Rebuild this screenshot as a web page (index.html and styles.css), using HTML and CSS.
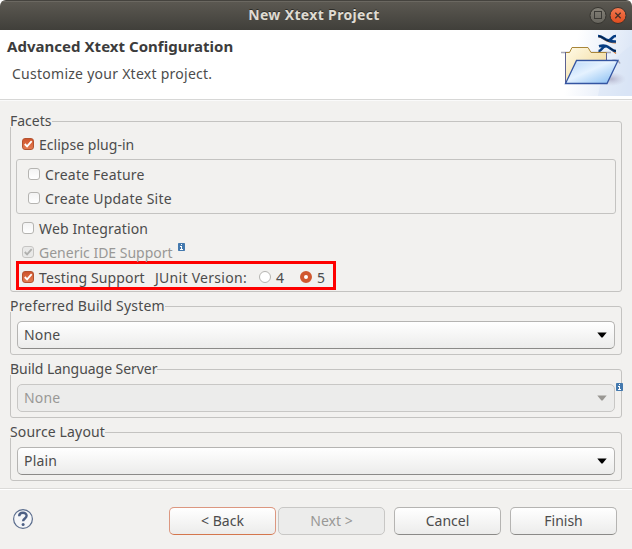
FILE: index.html
```html
<!DOCTYPE html>
<html lang="en">
<head>
<meta charset="utf-8">
<title>New Xtext Project</title>
<link rel="stylesheet" href="styles.css">
</head>
<body>
<div class="window">
  <div class="titlebar">
    <span class="title">New Xtext Project</span>
    <svg class="controls" width="40" height="20" viewBox="0 0 40 20">
      <defs>
        <linearGradient id="gray" x2="0" y2="1"><stop stop-color="#858279"/><stop offset="1" stop-color="#65635c"/></linearGradient>
        <linearGradient id="red" x2="0" y2="1"><stop stop-color="#f47b53"/><stop offset="1" stop-color="#df4b1c"/></linearGradient>
      </defs>
      <circle cx="10" cy="9.5" r="8" fill="url(#gray)" stroke="#34332e"/>
      <rect x="6.5" y="5.5" width="7" height="7" fill="none" stroke="#3b3a36"/>
      <circle cx="30" cy="9.5" r="8" fill="url(#red)" stroke="#34332e"/>
      <path d="M27.3 6.8l5.4 5.4M32.7 6.8l-5.4 5.4" stroke="#4a3027" stroke-width="1.3"/>
    </svg>
  </div>
  <header class="header">
    <div class="heading">
      <h1>Advanced Xtext Configuration</h1>
      <p>Customize your Xtext project.</p>
    </div>
    <svg class="banner" width="75" height="66" viewBox="0 0 75 66">
      <defs>
        <linearGradient id="sky" x1="0" y1=".4" x2="1" y2=".6"><stop offset=".2" stop-color="#fff"/><stop offset="1" stop-color="#dae5f6"/></linearGradient>
        <linearGradient id="back" x2="1" y2="1"><stop stop-color="#fffbe8"/><stop offset="1" stop-color="#efd28b"/></linearGradient>
        <linearGradient id="front" x2="1" y2="1"><stop stop-color="#b4d5f8"/><stop offset=".45" stop-color="#e5f2ff"/><stop offset="1" stop-color="#80baf1"/></linearGradient>
        <radialGradient id="shade"><stop stop-color="#9b98b5" stop-opacity=".65"/><stop offset="1" stop-color="#bbb8ce" stop-opacity="0"/></radialGradient>
      </defs>
      <rect width="75" height="66" fill="url(#sky)"/>
      <path d="M41 66Q45 35 75 15V66z" fill="#d8e3f6" opacity=".5"/>
      <ellipse cx="54" cy="49" rx="15" ry="7" fill="url(#shade)"/>
      <path d="M4 22.5h50M15 31.5h7M55 30.5q6-1 8 3" fill="none" stroke="#a7a9b8" stroke-width="1.5"/>
      <path d="M8.500 53V22.500h4L15 17.500h16l3 5h15.500V48" fill="url(#back)" stroke="#a88538"/>
      <path d="M8.500 53V22M49.500 23v7" stroke="#5d6292"/>
      <path d="M19.500 30.500H61L50 53.500H8.500z" fill="url(#front)" stroke="#3455a2" stroke-width="1.3"/>
      <path d="M20 32h38" stroke="#f0f8ff" opacity=".7"/>
      <path d="M41.500 7c5 0 7 6.300 17.500 5.900M42 22.200l3-3M53 18.500l6 5" fill="none" stroke="#d9792c" stroke-width="1.2"/>
      <path d="M41 6c6 0 6 6 18 5.500M59 6c-4 0-3 2.500-7 4.500M42 16.300c10-3 11 4.700 17 4.700M41.500 21c4 0 2-4 8-5" fill="none" stroke="#063d83" stroke-width="2.700"/>
      <path d="M42 6c5 1 6 4.500 10 5M53 18q4 3 6 3" fill="none" stroke="#071b36"/>
    </svg>
  </header>
  <main class="content">
    <section class="group facets">
      <div class="legend"><span class="w-facets">Facets</span></div>
      <div class="row first"><i class="check on"><svg viewBox="0 0 13 13"><path d="M3 6.5L5.5 9 10.5 3.5"/></svg></i><span class="w-eclipse">Eclipse plug-in</span></div>
      <div class="nested">
        <div class="row"><i class="check"></i><span class="w-feature">Create Feature</span></div>
        <div class="row"><i class="check"></i><span class="w-site">Create Update Site</span></div>
      </div>
      <div class="row"><i class="check"></i><span class="w-web">Web Integration</span></div>
      <div class="row disabled"><i class="check"><svg viewBox="0 0 13 13"><path d="M3 6.5L5.5 9 10.5 3.5"/></svg></i><span class="w-generic">Generic IDE Support</span><svg class="info" width="7" height="8" viewBox="0 0 7 8"><rect width="7" height="8" rx=".7" fill="#4479ae"/><path d="M3 1h1v1H3zM2 3h2v3h1v1H2V6h1V4H2z" fill="#fff"/></svg></div>
      <div class="row testing"><i class="check on"><svg viewBox="0 0 13 13"><path d="M3 6.5L5.5 9 10.5 3.5"/></svg></i><span class="w-testing">Testing Support</span><span class="w-junit">JUnit Version:</span><i class="radio"></i><span class="w-digit">4</span><i class="radio on"></i><span class="w-digit">5</span></div>
    </section>
    <section class="group">
      <div class="legend"><span class="w-build">Preferred Build System</span></div>
      <div class="select"><span class="w-none">None</span><svg width="10" height="6" viewBox="0 0 10 6"><path d="M.3.5h9.400L5.600 5.500H4.400z"/></svg></div>
    </section>
    <section class="group">
      <div class="legend"><span class="w-server">Build Language Server</span></div>
      <div class="select disabled"><span class="w-none">None</span><svg width="10" height="6" viewBox="0 0 10 6"><path d="M.3.5h9.400L5.600 5.500H4.400z"/></svg></div>
      <svg class="info corner" width="7" height="8" viewBox="0 0 7 8"><rect width="7" height="8" rx=".7" fill="#4479ae"/><path d="M3 1h1v1H3zM2 3h2v3h1v1H2V6h1V4H2z" fill="#fff"/></svg>
    </section>
    <section class="group">
      <div class="legend"><span class="w-layout">Source Layout</span></div>
      <div class="select"><span class="w-none">Plain</span><svg width="10" height="6" viewBox="0 0 10 6"><path d="M.3.5h9.400L5.600 5.500H4.400z"/></svg></div>
    </section>
  </main>
  <footer class="footer">
    <svg class="help" width="22" height="22" viewBox="0 0 22 22"><circle cx="11" cy="11" r="9.400" fill="#f5f6f8" stroke="#5b6d8d" stroke-width="1.2"/><path d="M7.2 8.2C7.2 3.7 14.6 3.8 14.6 7.8c0 2.6-3.5 2.7-3.5 5.4" fill="none" stroke="#4d6085" stroke-width="2.4"/><circle cx="11.1" cy="16.4" r="1.5" fill="#4d6085"/></svg>
    <div class="button focus"><span>&lt; Back</span></div>
    <div class="button disabled"><span>Next &gt;</span></div>
    <div class="button"><span>Cancel</span></div>
    <div class="button"><span>Finish</span></div>
  </footer>
</div>
</body>
</html>
```
FILE: styles.css
```css
* { box-sizing: border-box; }
body { margin: 0; background: #fff; font: 14px/20px "Noto Sans", sans-serif; color: #4c4c4c; }
span { white-space: nowrap; }
svg { display: block; flex: none; }
.window { width: 632px; height: 549px; background: #f2f1ef; border-radius: 6px 6px 0 0; overflow: hidden; }
.titlebar { height: 30px; display: grid; grid-template-columns: 1fr auto 1fr; align-items: center; background: linear-gradient(#5c5952, #403f3a); border-top: 1px solid #45433e; box-shadow: inset 0 1px #6b6861; }
.title { grid-column: 2; margin-top: -2px; padding-right: 4px; color: #dfdbd2; font-weight: 700; letter-spacing: .35px; text-shadow: 0 -1px #2d2c28; }
.controls { justify-self: end; margin-right: 4px; }
.header { height: 70px; background: #fff; border-bottom: 1px solid #d7d7d6; display: flex; justify-content: space-between; }
.heading { padding: 6px 0 0 7px; }
h1 { margin: 0; font-size: 15px; line-height: 20px; letter-spacing: .03px; color: #3c3c3c; white-space: nowrap; }
.heading p { margin: 8px 0 0 5px; letter-spacing: .26px; white-space: nowrap; }

.content { border-top: 1px solid #fafafa; padding: 20px 10px 0; height: 388px; }
.group { position: relative; height: 49px; border: 1px solid #c4c3c1; border-radius: 3px; margin-bottom: 14px; padding: 0 6px; }
.facets { height: 171px; padding: 0 5px; }
.legend { height: 14px; margin: -1px 0 0 -7px; display: flex; }
.facets .legend { margin-left: -6px; }
.legend span { background: #f2f1ef; height: 16px; line-height: 20px; margin-top: -10px; }

.row { height: 24px; display: flex; align-items: center; padding-left: 6px; }
.row span { padding-top: 2px; }
.row.first { margin-top: -3px; }
.check { width: 12px; height: 12px; flex: none; border: 1px solid #b5b4b1; border-radius: 3px; background: linear-gradient(#f3f3f3, #fff); margin: 0 5px 0 0; }
.check svg { width: 12px; height: 12px; margin: -1px; fill: none; stroke: #fff; stroke-width: 2; }
.check.on { background: linear-gradient(#cf542c, #e47d52); border-color: #b4532f; }
.disabled { color: #999896; }
.disabled .check { background: #e9e9e8; border-color: #c6c5c3; }
.disabled .check svg { stroke: #b0b0ae; }
.nested { height: 55px; border: 1px solid #c4c3c1; border-radius: 3px; padding: 2px 0 0 5px; margin: 3px 0 2px; }
.info { margin: -10px 0 0 5px; }
.info.corner { position: absolute; right: -2px; top: 13px; margin: 0; }
.testing { height: 29px; width: 320px; margin-top: -3px; border: 3px solid #fe0000; padding: 2px 0 0 3px; }
.radio { width: 12px; height: 12px; flex: none; border: 1px solid #b5b4b1; border-radius: 50%; background: #fff; }
.radio.on { border: 4px solid #d0582f; }

.select { height: 28px; border: 1px solid #b5b4b2; border-bottom-color: #8b8a88; border-radius: 5px; background: linear-gradient(#fff, #ececeb); display: flex; align-items: center; justify-content: space-between; padding: 0 7px 0 6px; margin-top: 1px; width: 598px; fill: #000; }
.select.disabled, .button.disabled { background: #ececeb; border-color: #c8c7c5; fill: #999793; }

.footer { height: 61px; border-top: 1px solid #dcdbd9; box-shadow: inset 0 1px #fff; display: flex; padding: 18px 0 0 12px; }
.help { margin: 1px 135px 0 0; }
.button { width: 107px; height: 28px; border: 1px solid #b5b4b2; border-bottom-color: #8b8a88; border-radius: 5px; background: linear-gradient(#fff, #ececeb); display: flex; justify-content: center; align-items: center; }
.button.focus { border-color: #dc9780; border-bottom-color: #d4764d; }
.button.disabled { margin: 0 9px 0 2px; }
.button:last-child { margin-left: 9px; }

.w-eclipse { letter-spacing: .03px; }
.w-feature { letter-spacing: .2px; }
.w-site { letter-spacing: .22px; }
.w-web { letter-spacing: .14px; }
.w-testing { width: 116px; letter-spacing: .13px; }
.w-junit { width: 104px; letter-spacing: .28px; }
.w-build { letter-spacing: .18px; }
.w-server { letter-spacing: -.05px; }
.w-layout { letter-spacing: .15px; }
.w-none { letter-spacing: .2px; }
.w-digit { margin-left: 5px; width: 24px; }
.w-testing, .w-junit, .w-digit { flex: none; }
```
